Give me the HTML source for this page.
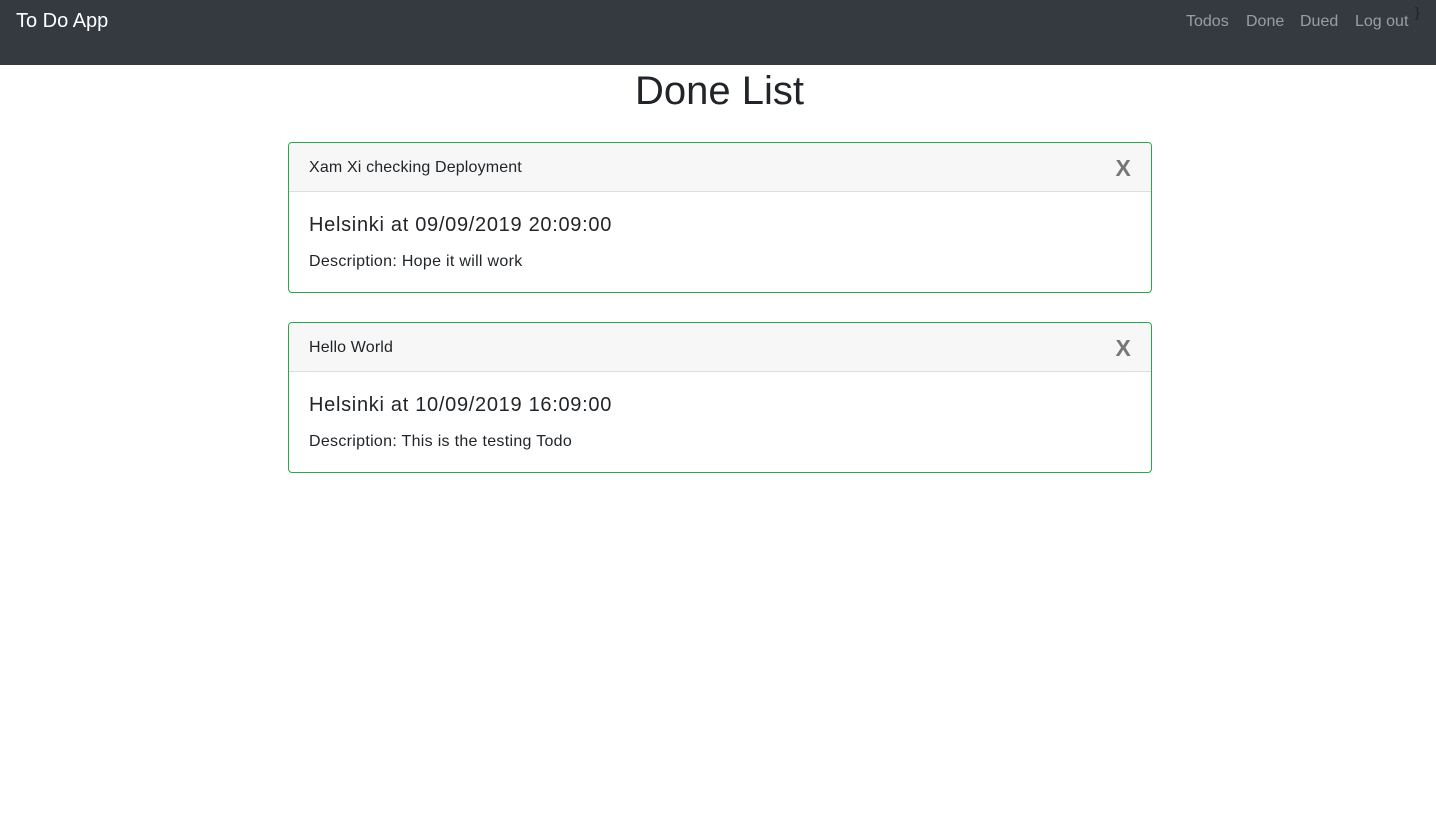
<!DOCTYPE html>
<html><head><style>
*{box-sizing:border-box;margin:0;padding:0}
body{width:1436px;height:813px;background:#fff;font-family:"Liberation Sans",sans-serif;color:#212529;position:relative;overflow:hidden}
.nav{position:absolute;left:0;top:0;width:1436px;height:65px;background:#343a40}
.brand{position:absolute;left:16px;top:10px;font-size:20px;color:#fff}
.links{position:absolute;top:13px;font-size:16px;color:rgba(255,255,255,.5)}
.brace{position:absolute;left:1415px;top:4px;font-size:14px;color:#222}
h1{position:absolute;left:0;width:1436px;text-align:center;top:67px;font-size:40px;font-weight:500;line-height:48px;padding-left:3px}
.card{position:absolute;left:288px;width:864px;height:151px;border:1px solid #28a745;border-radius:4px;overflow:hidden}
.hd{height:49px;background:#f7f7f7;border-bottom:1px solid #ddd;padding:16px 20px;font-size:16px;position:relative;letter-spacing:.15px}
.x{position:absolute;right:20px;top:12px;font-size:23px;font-weight:bold;color:#777}
.t{position:absolute;left:20px;top:71px;font-size:20px;font-weight:500;letter-spacing:.7px}
.d{position:absolute;left:20px;top:110px;font-size:16px;letter-spacing:.3px}
</style></head><body>
<div class="nav"><div class="brand">To Do App</div>
<span class="links" style="left:1186px">Todos</span>
<span class="links" style="left:1246px">Done</span>
<span class="links" style="left:1300px">Dued</span>
<span class="links" style="left:1355px">Log out</span>
<span class="brace">}</span></div>
<h1>Done List</h1>
<div class="card" style="top:142px"><div class="hd">Xam Xi checking Deployment<span class="x">X</span></div>
<div class="t">Helsinki at 09/09/2019 20:09:00</div><div class="d">Description: Hope it will work</div></div>
<div class="card" style="top:322px"><div class="hd">Hello World<span class="x">X</span></div>
<div class="t">Helsinki at 10/09/2019 16:09:00</div><div class="d">Description: This is the testing Todo</div></div>
</body></html>
